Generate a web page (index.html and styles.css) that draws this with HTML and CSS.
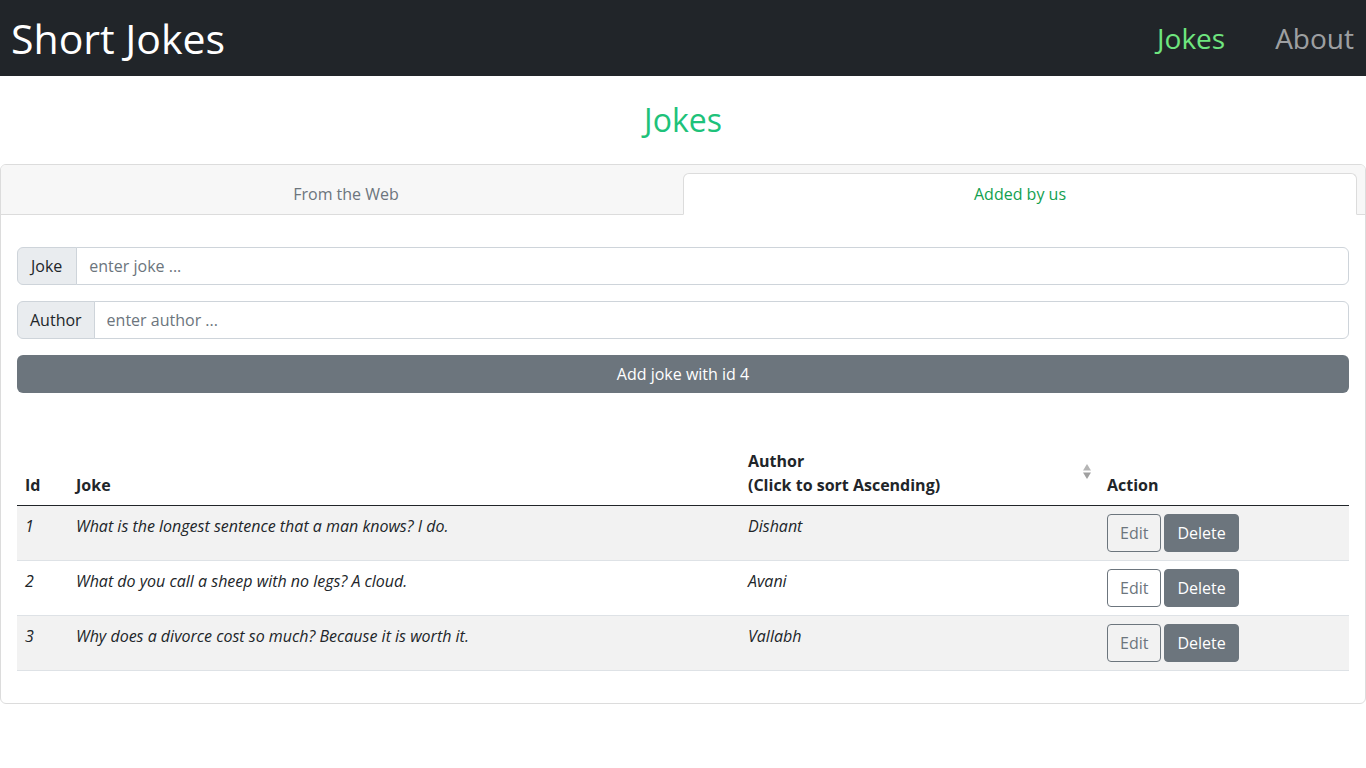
FILE: index.html
```html
<!DOCTYPE html>
<html lang="en">
<head>
<meta charset="utf-8">
<title>Short Jokes</title>
<link rel="stylesheet" href="styles.css">
</head>
<body>
<nav class="navbar">
  <a class="brand" href="#">Short Jokes</a>
  <ul class="nav-links">
    <li><a class="nav-link active" href="#">Jokes</a></li>
    <li><a class="nav-link" href="#">About</a></li>
  </ul>
</nav>

<h2 class="title">Jokes</h2>

<div class="card">
  <div class="card-header">
    <ul class="tabs">
      <li class="tab"><a href="#">From the Web</a></li>
      <li class="tab tab-active"><a href="#">Added by us</a></li>
    </ul>
  </div>
  <div class="card-body">
    <div class="input-group">
      <span class="input-label label-joke">Joke</span>
      <input class="input" type="text" placeholder="enter joke ...">
    </div>
    <div class="input-group">
      <span class="input-label">Author</span>
      <input class="input" type="text" placeholder="enter author ...">
    </div>
    <button class="btn-add">Add joke with id 4</button>

    <table class="table">
      <colgroup>
        <col class="c-id"><col class="c-joke"><col class="c-author"><col class="c-action">
      </colgroup>
      <thead>
        <tr>
          <th>Id</th>
          <th>Joke</th>
          <th class="sortable">Author<br>(Click to sort Ascending)
            <svg class="sort-icon" width="8" height="16" viewBox="0 0 8 16"><polygon points="4,0 8,6.5 0,6.5" fill="#b5b5b5"/><polygon points="0,8.5 8,8.5 4,15" fill="#a0a0a0"/></svg>
          </th>
          <th>Action</th>
        </tr>
      </thead>
      <tbody>
        <tr class="striped">
          <td>1</td>
          <td>What is the longest sentence that a man knows? I do.</td>
          <td>Dishant</td>
          <td><button class="btn-edit">Edit</button><button class="btn-del">Delete</button></td>
        </tr>
        <tr>
          <td>2</td>
          <td>What do you call a sheep with no legs? A cloud.</td>
          <td>Avani</td>
          <td><button class="btn-edit">Edit</button><button class="btn-del">Delete</button></td>
        </tr>
        <tr class="striped">
          <td>3</td>
          <td>Why does a divorce cost so much? Because it is worth it.</td>
          <td>Vallabh</td>
          <td><button class="btn-edit">Edit</button><button class="btn-del">Delete</button></td>
        </tr>
      </tbody>
    </table>
  </div>
</div>
</body>
</html>
```
FILE: styles.css
```css
* { box-sizing: border-box; }
body {
  margin: 0;
  font-family: "Open Sans", "Noto Sans", sans-serif;
  font-size: 16px;
  line-height: 1.5;
  color: #212529;
  background: #fff;
}
a { text-decoration: none; }

.navbar {
  height: 76px;
  background: #212529;
  display: flex;
  align-items: center;
  justify-content: space-between;
  padding: 0 12px 0 11px;
}
.brand {
  color: #fff;
  font-size: 41px;
  line-height: 48px;
}
.nav-links {
  list-style: none;
  margin: 0;
  padding: 0;
  display: flex;
  gap: 50px;
}
.nav-link {
  font-size: 28px;
  line-height: 40px;
  color: rgba(255,255,255,.58);
}
.nav-link.active { color: #6fe57f; }

.title {
  margin: 0;
  padding: 25px 0;
  font-size: 32px;
  line-height: 38px;
  font-weight: 400;
  text-align: center;
  color: #1ec27a;
}

.card {
  border: 1px solid #dcdcdc;
  border-radius: 6px;
  overflow: hidden;
}
.card-header {
  background: #f7f7f7;
  border-bottom: 1px solid #dcdcdc;
  padding: 8px 8px 0;
}
.tabs {
  list-style: none;
  margin: 0 0 -1px;
  padding: 0;
  display: flex;
}
.tab {
  flex: 1 1 0;
  text-align: center;
  border: 1px solid transparent;
  border-radius: 6px 6px 0 0;
}
.tab a {
  display: block;
  padding: 8px 16px;
  line-height: 24px;
  color: #6c757d;
}
.tab-active {
  background: #fff;
  border-color: #dcdcdc #dcdcdc #fff;
}
.tab-active a { color: #12a050; }

.card-body {
  padding: 16px;
}
.input-group {
  display: flex;
  margin: 16px 0;
  height: 38px;
}
.input-label {
  display: flex;
  align-items: center;
  padding: 6px 12px;
  background: #e9ecef;
  border: 1px solid #ced4da;
  border-radius: 6px 0 0 6px;
  color: #212529;
}
.label-joke { padding: 6px 14px 6px 13px; }
.input {
  flex: 1;
  min-width: 0;
  margin-left: -1px;
  padding: 6px 12px;
  font: inherit;
  color: #212529;
  border: 1px solid #ced4da;
  border-radius: 0 6px 6px 0;
  background: #fff;
}
.input::placeholder { color: #6c757d; }

.btn-add {
  display: block;
  width: 100%;
  height: 38px;
  border: 0;
  border-radius: 6px;
  background: #6c757d;
  color: #fff;
  font: inherit;
  padding: 6px 12px;
}

.table {
  width: 100%;
  margin-top: 48px;
  margin-bottom: 16px;
  border-collapse: collapse;
  table-layout: fixed;
  vertical-align: top;
}
.c-id { width: 51px; }
.c-joke { width: 672px; }
.c-author { width: 359px; }
.c-action { width: 250px; }

.table th {
  text-align: left;
  font-weight: 700;
  vertical-align: bottom;
  padding: 8px;
  border-bottom: 1px solid #212529;
  line-height: 24px;
}
.sortable { position: relative; }
.sort-icon {
  position: absolute;
  right: 8px;
  top: 23px;
}
.table td {
  padding: 8px;
  vertical-align: top;
  font-style: italic;
  border-bottom: 1px solid #dee2e6;
  line-height: 24px;
}
.table tr.striped td { background: #f2f2f2; }

.btn-edit, .btn-del {
  font: inherit;
  font-style: normal;
  height: 38px;
  padding: 6px 12px;
  border-radius: 4px;
  vertical-align: top;
}
.btn-edit {
  background: transparent;
  color: #6c757d;
  border: 1px solid #6c757d;
}
.btn-del {
  margin-left: 3px;
  background: #6c757d;
  color: #fff;
  border: 1px solid #6c757d;
}
```
